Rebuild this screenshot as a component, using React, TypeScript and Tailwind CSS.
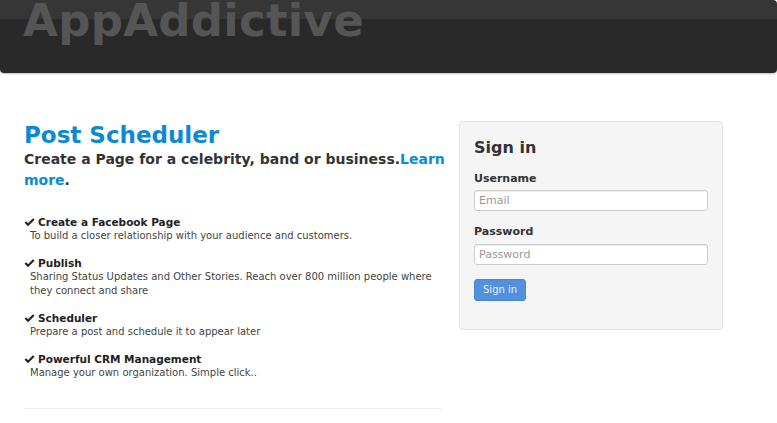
const features = [
  { title: 'Create a Facebook Page', text: 'To build a closer relationship with your audience and customers.' },
  { title: 'Publish', text: 'Sharing Status Updates and Other Stories. Reach over 800 million people where they connect and share' },
  { title: 'Scheduler', text: 'Prepare a post and schedule it to appear later' },
  { title: 'Powerful CRM Management', text: 'Manage your own organization. Simple click..' },
];

function CheckMark() {
  return (
    <svg viewBox="0 0 12 10" className="h-[9px] w-[11px] fill-[#222]">
      <path d="M0.5 5.2 L2.3 3.6 L4.4 5.8 L9.9 0.4 L11.6 2 L4.4 9.2 Z" />
    </svg>
  );
}

export default function App() {
  const font = { fontFamily: '"DejaVu Sans", Verdana, sans-serif' };
  return (
    <div className="min-h-[423px] w-[777px] bg-white text-[#333]" style={font}>
      <header className="h-[73px] rounded-b-[4px] rounded-tr-[4px] bg-[linear-gradient(#363636_0,#363636_19px,#292929_19px)] shadow-[0_1px_2px_rgba(0,0,0,0.25)]">
        <div className="pl-[23px]">
          <span className="block text-[45px] font-bold leading-[41px] tracking-[0.3px] text-[#555]">AppAddictive</span>
        </div>
      </header>

      <main className="flex gap-[3px] px-[24px] pt-[48px]">
        <section className="w-[432px]">
          <h1 className="text-[23px] font-bold leading-[28px] text-[#0a8ad3]">Post Scheduler</h1>
          <p className="text-[14px] font-bold leading-[21px] text-[#333]">
            Create a Page for a celebrity, band or business.<a className="text-[#0a8ad3]">Learn more</a>.
          </p>

          <ul className="mt-[24px] flex flex-col gap-[13px]">
            {features.map((f) => (
              <li key={f.title}>
                <div className="flex items-center gap-[3px] text-[10.5px] font-bold leading-[14px] text-[#222]">
                  <CheckMark />
                  {f.title}
                </div>
                <p className="w-[420px] pl-[6px] text-[10px] leading-[14px] text-[#444]">{f.text}</p>
              </li>
            ))}
          </ul>

          <hr className="mt-[28px] w-[418px] border-t border-[#eee]" />
        </section>

        <aside className="h-[209px] w-[264px] rounded-[4px] border border-[#e3e3e3] bg-[#f5f5f5] px-[14px] pt-[14px]">
          <h2 className="text-[16px] font-bold leading-[24px] text-[#333]">Sign in</h2>
          <label className="mt-[11px] block text-[11px] font-bold leading-[16px] text-[#333]">Username</label>
          <input
            placeholder="Email"
            className="mt-[3px] h-[21px] w-[234px] rounded-[3px] border border-[#ccc] bg-white px-[4px] text-[11px] placeholder:text-[#999] shadow-[inset_0_1px_1px_rgba(0,0,0,0.075)]"
          />
          <label className="mt-[13px] block text-[11px] font-bold leading-[16px] text-[#333]">Password</label>
          <input
            type="password"
            placeholder="Password"
            className="mt-[4px] h-[21px] w-[234px] rounded-[3px] border border-[#ccc] bg-white px-[4px] text-[11px] placeholder:text-[#999] shadow-[inset_0_1px_1px_rgba(0,0,0,0.075)]"
          />
          <div className="mt-[11px]">
            <button className="h-[22px] rounded-[3px] border border-[#4a86d0] bg-[#5291e0] px-[8px] text-[10px] leading-[20px] text-[#e8f0fb]">Sign in</button>
          </div>
        </aside>
      </main>
    </div>
  );
}
